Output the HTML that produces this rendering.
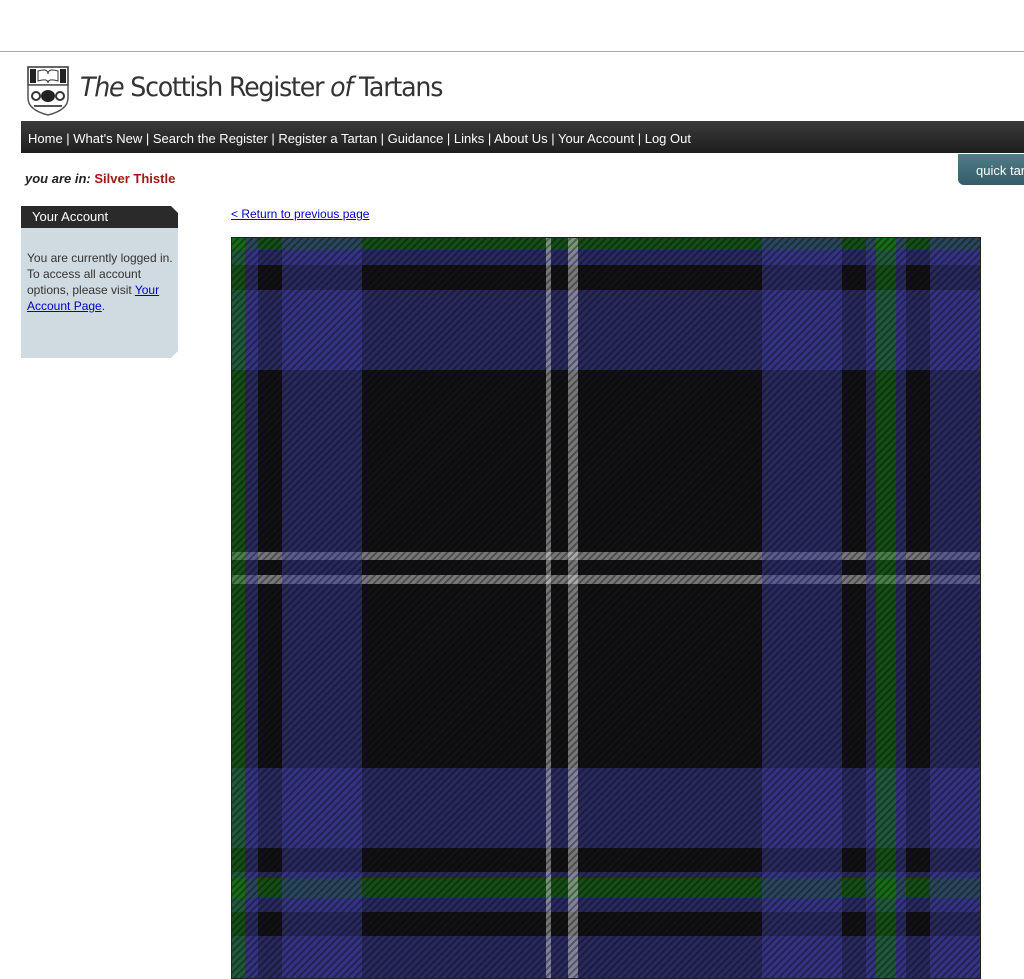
<!DOCTYPE html>
<html><head><meta charset="utf-8"><style>
body{margin:0;width:1024px;height:979px;overflow:hidden;background:#fff;font-family:"Liberation Sans",Arial,sans-serif;position:relative}
.abs{position:absolute}
.nav{left:21px;top:121px;width:1003px;height:32px;background:linear-gradient(#3a3a3a,#1e1e1e);color:#fff;font-size:13px;line-height:36px;padding-left:7px;box-sizing:border-box;white-space:nowrap}
a{color:#00c;}
svg rect.b{opacity:.5}
</style></head><body>
<div class="abs" style="left:0;top:51px;width:1024px;height:1px;background:#aaa"></div>
<svg class="abs" style="left:26px;top:66px" width="44" height="50" viewBox="0 0 44 50">
<rect x="2" y="1" width="40" height="18" fill="#fff" stroke="#333" stroke-width="1.5"/>
<rect x="4" y="3" width="6" height="14" fill="#222"/><rect x="34" y="3" width="6" height="14" fill="#222"/>
<path d="M12 5 Q22 2 22 8 Q22 2 32 5 V15 Q22 12 22 17 Q22 12 12 15Z" fill="#fff" stroke="#333"/>
<path d="M2 19 H42 V32 Q42 44 22 49 Q2 44 2 32Z" fill="#fff" stroke="#555" stroke-width="1.5"/>
<ellipse cx="22" cy="30" rx="7" ry="6" fill="#222"/><circle cx="10" cy="30" r="4" fill="none" stroke="#333" stroke-width="2"/><circle cx="34" cy="30" r="4" fill="none" stroke="#333" stroke-width="2"/>
<path d="M8 40 H36" stroke="#555" stroke-width="2"/>
</svg>
<div class="abs" style="left:80px;top:72px;font-size:27px;color:#333;font-family:'DejaVu Sans',sans-serif;letter-spacing:-1.3px;white-space:nowrap;transform:scaleX(0.937);transform-origin:0 0"><i>The</i> Scottish Register <i>of</i> Tartans</div>
<div class="abs nav">Home | What's New | Search the Register | Register a Tartan | Guidance | Links | About Us | Your Account | Log Out</div>
<div class="abs" style="left:958px;top:154px;width:80px;height:31px;background:linear-gradient(#4f7d88,#355c68);border-radius:0 0 0 6px;color:#fff;font-size:13px;line-height:33px;padding-left:18px;box-sizing:border-box;white-space:nowrap">quick tartan</div>
<div class="abs" style="left:25px;top:171px;font-size:13px;font-weight:bold;color:#222"><i>you are in:</i> <span style="color:#a01818">Silver Thistle</span></div>
<div class="abs" style="left:21px;top:206px;width:157px;height:152px;background:#cfdbe0;clip-path:polygon(0 0,150px 0,157px 7px,157px 145px,150px 152px,0 152px)"></div>
<div class="abs" style="left:21px;top:206px;width:157px;height:22px;background:#2a2a2a;color:#fff;font-size:13px;line-height:22px;padding-left:11px;box-sizing:border-box;clip-path:polygon(0 0,150px 0,157px 7px,157px 22px,0 22px)">Your Account</div>
<div class="abs" style="left:27px;top:250px;width:146px;font-size:12px;line-height:16px;color:#333">You are currently logged in. To access all account options, please visit <a href="#">Your Account Page</a>.</div>
<a class="abs" href="#" style="left:231px;top:207px;font-size:12px">&lt; Return to previous page</a>
<svg class="abs" style="left:231px;top:237px" width="750" height="742">
<defs><pattern id="d" width="5" height="5" patternUnits="userSpaceOnUse" patternTransform="rotate(45)"><rect width="2" height="5" fill="#000" opacity=".35"/></pattern></defs>
<rect width="750" height="742" fill="#121214"/>
<rect class="b" y="0" width="750" height="13" fill="#1a8a1a"/>
<rect class="b" y="13" width="750" height="15" fill="#4040a8"/>
<rect class="b" y="53" width="750" height="80" fill="#4040a8"/>
<rect class="b" y="315" width="750" height="8" fill="#ddd"/>
<rect class="b" y="338" width="750" height="9" fill="#ddd"/>
<rect class="b" y="531" width="750" height="80" fill="#4040a8"/>
<rect class="b" y="635" width="750" height="6" fill="#4040a8"/>
<rect class="b" y="641" width="750" height="20" fill="#1a8a1a"/>
<rect class="b" y="661" width="750" height="14" fill="#4040a8"/>
<rect class="b" y="699" width="750" height="43" fill="#4040a8"/>
<rect class="b" x="0" width="14" height="742" fill="#1a8a1a"/>
<rect class="b" x="14" width="13" height="742" fill="#4040a8"/>
<rect class="b" x="51" width="80" height="742" fill="#4040a8"/>
<rect class="b" x="315" width="5" height="742" fill="#ddd"/>
<rect class="b" x="337" width="10" height="742" fill="#ddd"/>
<rect class="b" x="531" width="80" height="742" fill="#4040a8"/>
<rect class="b" x="635" width="10" height="742" fill="#4040a8"/>
<rect class="b" x="645" width="20" height="742" fill="#1a8a1a"/>
<rect class="b" x="665" width="10" height="742" fill="#4040a8"/>
<rect class="b" x="699" width="51" height="742" fill="#4040a8"/>
<rect width="750" height="742" fill="url(#d)"/>
<rect x=".5" y=".5" width="749" height="741" fill="none" stroke="#222"/>
</svg>
</body></html>
